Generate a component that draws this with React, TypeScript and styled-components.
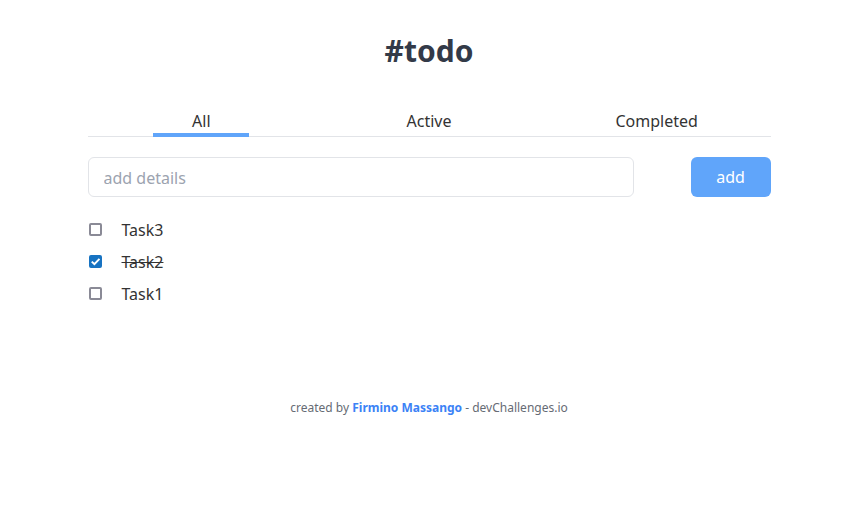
import React, { useState } from "react";
import styled, { createGlobalStyle } from "styled-components";

const Global = createGlobalStyle`
  html, body { margin: 0; padding: 0; background: #fff; }
  body { font-family: "Noto Sans", "Open Sans", sans-serif; color: #333; }
  * { box-sizing: border-box; }
`;

const Page = styled.div`
  width: 854px;
  padding-left: 4px;
  display: flex;
  flex-direction: column;
  align-items: center;
`;

const Title = styled.h1`
  margin: 30px 0 0;
  font-size: 30px;
  line-height: 41px;
  font-weight: 700;
  color: #333a48;
`;

const Main = styled.div`
  width: 683px;
  margin-top: 39px;
  display: flex;
  flex-direction: column;
`;

const Tabs = styled.div`
  display: grid;
  grid-template-columns: repeat(3, 1fr);
  border-bottom: 1px solid #e2e4e8;
`;

const Tab = styled.button<{ $active?: boolean }>`
  position: relative;
  background: none;
  border: none;
  padding: 0 0 4px;
  font-family: inherit;
  font-size: 16px;
  line-height: 22px;
  color: #333;
  cursor: pointer;
  &::after {
    content: "";
    position: absolute;
    left: 50%;
    bottom: -1px;
    transform: translateX(-50%);
    width: 96px;
    height: 4px;
    background: ${(p) => (p.$active ? "#60a5fa" : "transparent")};
  }
`;

const Form = styled.div`
  display: flex;
  justify-content: space-between;
  margin-top: 20px;
`;

const Input = styled.input`
  width: 546px;
  height: 40px;
  border: 1px solid #e2e4e8;
  border-radius: 6px;
  padding: 2px 15px 0;
  font-family: inherit;
  font-size: 16px;
  color: #333;
  outline: none;
  &::placeholder { color: #9ca3af; }
`;

const AddButton = styled.button`
  width: 80px;
  height: 40px;
  border: none;
  border-radius: 6px;
  background: #60a5fa;
  color: #fff;
  font-family: inherit;
  font-size: 16px;
  cursor: pointer;
`;

const List = styled.ul`
  list-style: none;
  margin: 22px 0 0;
  padding: 0;
  display: flex;
  flex-direction: column;
  gap: 10px;
`;

const Item = styled.li`
  display: flex;
  align-items: center;
  gap: 20px;
  height: 22px;
`;

const Check = styled.input`
  appearance: none;
  -webkit-appearance: none;
  margin: -1px 0 0 1px;
  width: 13px;
  height: 13px;
  border: 2px solid #8a8a96;
  border-radius: 2px;
  background: #fff;
  cursor: pointer;
  &:checked {
    border-color: #1773c2;
    background: #1773c2
      url("data:image/svg+xml;utf8,<svg xmlns='http://www.w3.org/2000/svg' viewBox='0 0 10 10'><path d='M1.6 5.1 L4 7.4 L8.6 2.6' fill='none' stroke='white' stroke-width='1.8'/></svg>")
      center / 11px 11px no-repeat;
  }
`;

const Label = styled.span<{ $done?: boolean }>`
  font-size: 16px;
  line-height: 22px;
  color: #333;
  text-decoration: ${(p) => (p.$done ? "line-through" : "none")};
`;

const Footer = styled.footer`
  margin-top: 95px;
  font-size: 12px;
  line-height: 16px;
  color: #666b74;
`;

const Author = styled.a`
  color: #3b82f6;
  font-weight: 700;
  text-decoration: none;
`;

export default function App() {
  const [tasks, setTasks] = useState([
    { id: 3, name: "Task3", done: false },
    { id: 2, name: "Task2", done: true },
    { id: 1, name: "Task1", done: false },
  ]);
  return (
    <Page>
      <Global />
      <Title>#todo</Title>
      <Main>
        <Tabs>
          <Tab $active>All</Tab>
          <Tab>Active</Tab>
          <Tab>Completed</Tab>
        </Tabs>
        <Form>
          <Input placeholder="add details" />
          <AddButton>add</AddButton>
        </Form>
        <List>
          {tasks.map((t) => (
            <Item key={t.id}>
              <Check
                type="checkbox"
                checked={t.done}
                onChange={() =>
                  setTasks((ts) => ts.map((x) => (x.id === t.id ? { ...x, done: !x.done } : x)))
                }
              />
              <Label $done={t.done}>{t.name}</Label>
            </Item>
          ))}
        </List>
      </Main>
      <Footer>
        created by <Author>Firmino Massango</Author> - devChallenges.io
      </Footer>
    </Page>
  );
}
